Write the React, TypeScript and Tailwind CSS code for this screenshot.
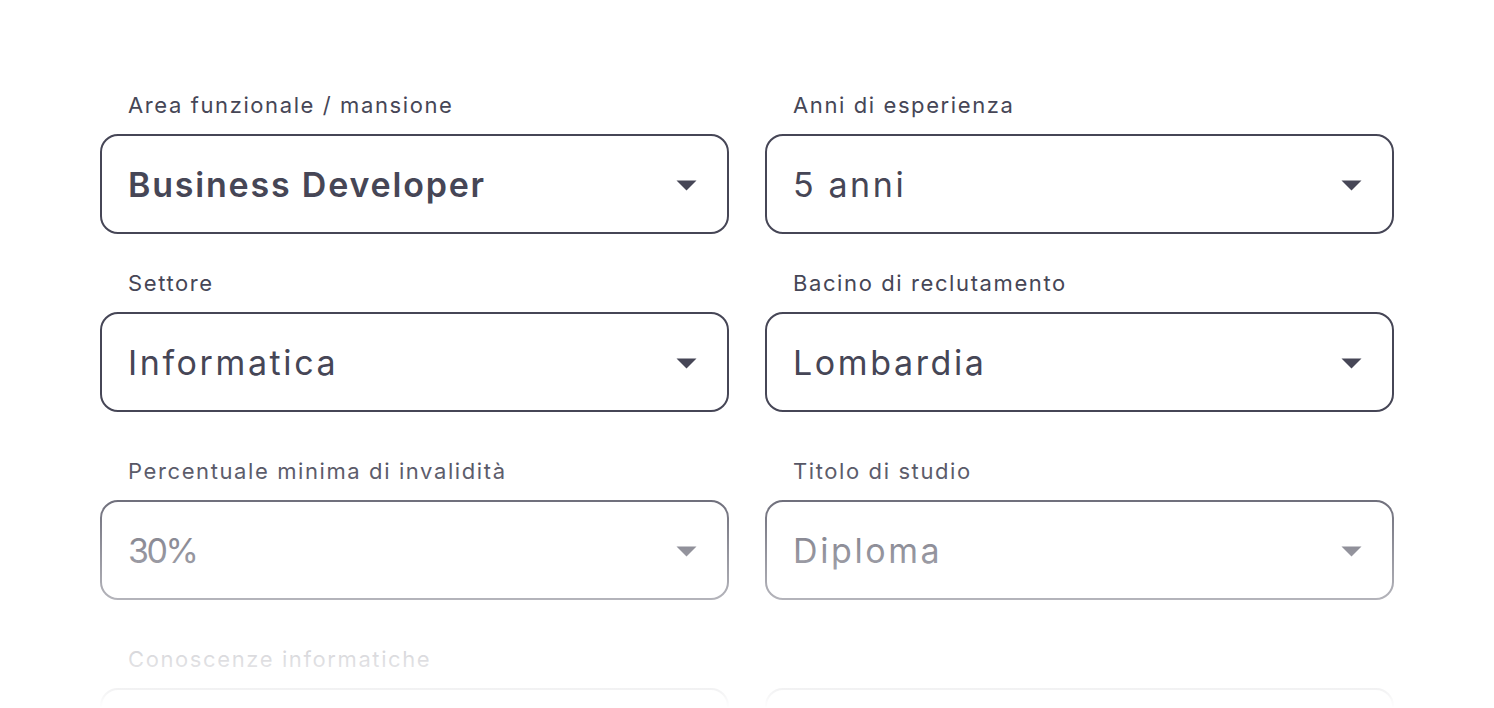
import React from "react";

type TypeField = {
  label: string;
  value: string;
  bold?: boolean;
  tight?: boolean;
};

const rows: { className: string; fields: TypeField[] }[] = [
  {
    className: "pt-[90px]",
    fields: [
      { label: "Area funzionale / mansione", value: "Business Developer", bold: true },
      { label: "Anni di esperienza", value: "5 anni" },
    ],
  },
  {
    className: "mt-[34px]",
    fields: [
      { label: "Settore", value: "Informatica" },
      { label: "Bacino di reclutamento", value: "Lombardia" },
    ],
  },
  {
    className: "mt-[44px]",
    fields: [
      { label: "Percentuale minima di invalidità", value: "30%", tight: true },
      { label: "Titolo di studio", value: "Diploma" },
    ],
  },
  {
    className: "mt-[44px]",
    fields: [
      { label: "Conoscenze informatiche", value: "" },
      { label: "", value: "" },
    ],
  },
];

function Caret() {
  return (
    <svg width="21" height="11" viewBox="0 0 21 11" className="mt-[3px] shrink-0">
      <path d="M0.5 0.5 H20.5 L10.5 10.5 Z" fill="#464656" />
    </svg>
  );
}

function SelectField({ label, value, bold, tight }: TypeField) {
  let valueClass = "text-[34px] font-normal text-[#464656] tracking-[2.6px]";
  if (bold) valueClass = "text-[34px] font-semibold text-[#464656] tracking-[1.8px]";
  if (tight) valueClass = "text-[34px] font-normal text-[#464656] tracking-[-2.5px]";

  return (
    <div className="flex flex-col">
      <div className="h-[30px] pl-[28px] text-[22px] leading-[30px] text-[#464656] tracking-[1.6px]">
        {label}
      </div>
      <div className="mt-[14px] h-[100px] rounded-[18px] border-2 border-[#464656] flex items-center justify-between pl-[26px] pr-[30px]">
        <span className={valueClass}>{value}</span>
        <Caret />
      </div>
    </div>
  );
}

export default function App() {
  return (
    <div
      className="relative h-[708px] w-full overflow-hidden bg-white"
      style={{ fontFamily: "Inter, 'Noto Sans', sans-serif" }}
    >
      <div className="mx-auto w-[1294px]">
        {rows.map((row, i) => (
          <div key={i} className={"grid grid-cols-2 gap-x-9 " + row.className}>
            {row.fields.map((f, j) => (
              <SelectField key={j} {...f} />
            ))}
          </div>
        ))}
      </div>
      <div className="pointer-events-none absolute inset-x-0 top-[440px] h-[268px] bg-gradient-to-b from-white/0 to-white" />
    </div>
  );
}
